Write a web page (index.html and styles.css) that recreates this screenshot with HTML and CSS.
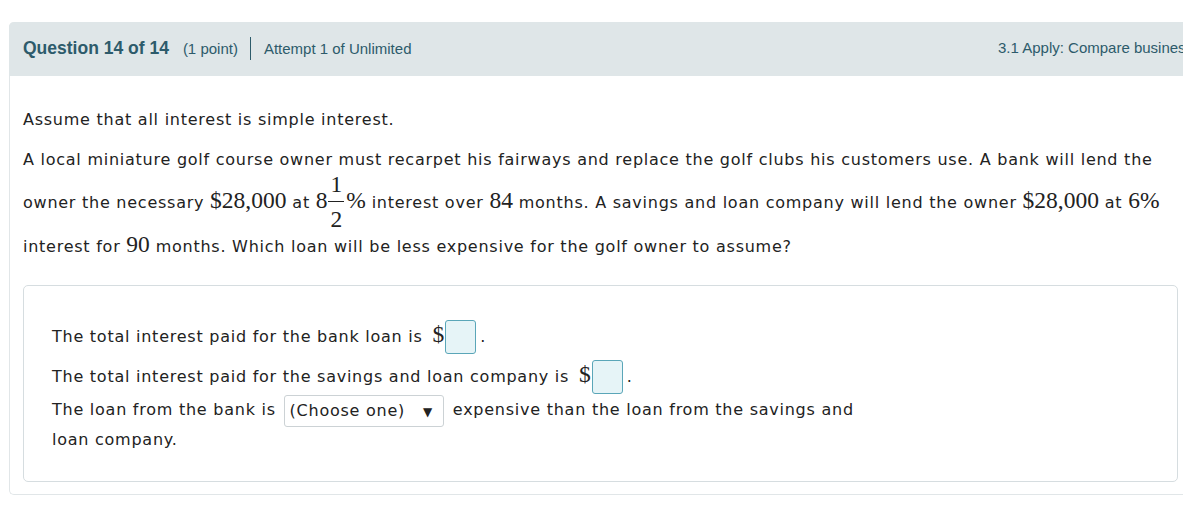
FILE: index.html
```html
<!DOCTYPE html>
<html>
<head>
<meta charset="utf-8">
<link rel="stylesheet" href="styles.css">
</head>
<body>
<div class="question">
  <div class="qhead">
    <div class="qhead-left">
      <span class="qnum">Question 14 of 14</span>
      <span class="qpts">(1 point)</span>
      <span class="qsep"></span>
      <span class="qatt">Attempt 1 of Unlimited</span>
    </div>
    <div class="qhead-right">3.1 Apply: Compare business loans</div>
  </div>
  <div class="qbody">
    <p class="para">Assume that all interest is simple interest.</p>
    <p class="para">A local miniature golf course owner must recarpet his fairways and replace the golf clubs his customers use. A bank will lend the owner the necessary <span class="m">$28,000</span> at <span class="m">8</span><span class="frac"><span class="num">1</span><span class="den">2</span></span><span class="m">%</span> interest over <span class="m">84</span> months. A savings and loan company will lend the owner <span class="m">$28,000</span> at <span class="m">6%</span> interest for <span class="m">90</span> months. Which loan will be less expensive for the golf owner to assume?</p>
    <div class="answer">
      <div class="answer-inner">
        <p class="aline">The total interest paid for the bank loan is <span class="m dollar">$</span><span class="box"></span><span class="dot">.</span></p>
        <p class="aline second">The total interest paid for the savings and loan company is <span class="m dollar">$</span><span class="box"></span><span class="dot">.</span></p>
        <p class="aline third">The loan from the bank is <span class="select">(Choose one)<span class="arrow">▼</span></span> expensive than the loan from the savings and loan company.</p>
      </div>
    </div>
  </div>
</div>
</body>
</html>
```
FILE: styles.css
```css
html, body {
  margin: 0;
  padding: 0;
  overflow: hidden;
  background: #fff;
}
body {
  width: 1183px;
  height: 505px;
}
.question {
  box-sizing: border-box;
  width: 1183px;
  margin: 22px 0 0 9px;
  border-left: 1px solid #e1e6e8;
  border-bottom: 1px solid #e1e6e8;
  border-radius: 5px 0 0 5px;
}
.qhead {
  display: flex;
  align-items: center;
  box-sizing: border-box;
  height: 54px;
  background: #dfe6e8;
  border-radius: 5px 0 0 0;
  margin-left: -1px;
  padding: 0 14px 2px 14px;
  font-family: "Liberation Sans", Arial, sans-serif;
  color: #2d5b6b;
}
.qhead-left {
  flex: 1;
  display: flex;
  align-items: center;
}
.qnum {
  font-size: 17.5px;
  font-weight: bold;
}
.qpts {
  font-size: 15px;
  margin-left: 14px;
}
.qsep {
  width: 1px;
  height: 23px;
  background: #2d5b6b;
  margin: 0 13px 0 12px;
}
.qatt {
  font-size: 15px;
}
.qhead-right {
  width: 180px;
  font-size: 15px;
  white-space: nowrap;
  margin-top: -2px;
}
.qbody {
  padding: 24px 13px 12px 13px;
  font-family: "DejaVu Sans", Verdana, sans-serif;
  font-size: 16px;
  letter-spacing: 0.75px;
  color: #222;
}
.para {
  margin: 0;
  line-height: 40px;
}
.m {
  font-family: "Liberation Serif", "Times New Roman", serif;
  font-size: 23.5px;
  line-height: 1;
  letter-spacing: 0;
}
.frac {
  display: inline-flex;
  flex-direction: column;
  align-items: center;
  vertical-align: middle;
  font-family: "Liberation Serif", "Times New Roman", serif;
  font-size: 23.5px;
  letter-spacing: 0;
  line-height: 28px;
  margin: -10px 2px -6px 1px;
}
.num {
  border-bottom: 1px solid #222;
  padding: 0 2px 3px 2px;
}
.den {
  padding-top: 3px;
}
.answer {
  margin-top: 18px;
  border: 1px solid #d6dde0;
  border-radius: 5px;
  width: 1155px;
  box-sizing: border-box;
  padding: 34px 28px 26px 28px;
}
.answer-inner {
  width: 830px;
}
.aline {
  margin: 0;
  line-height: 30px;
}
.aline.second {
  margin-top: 6px;
}
.aline.third {
  margin-top: 1px;
}
.dollar {
  margin-left: 4px;
}
.box {
  display: inline-block;
  width: 29px;
  height: 32px;
  vertical-align: middle;
  background: #e6f4f7;
  border: 1px solid #5aa6b8;
  border-radius: 3px;
  margin: 0 1px 0 1px;
}
.dot {
  margin-left: 3px;
}
.select {
  display: inline-block;
  box-sizing: border-box;
  height: 32px;
  line-height: 30px;
  padding: 0 10px 0 5px;
  border: 1px solid #ccd2d5;
  border-radius: 3px;
  vertical-align: middle;
  margin: -2px 3px -2px 2px;
}
.arrow {
  font-size: 12px;
  margin-left: 18px;
}
```
